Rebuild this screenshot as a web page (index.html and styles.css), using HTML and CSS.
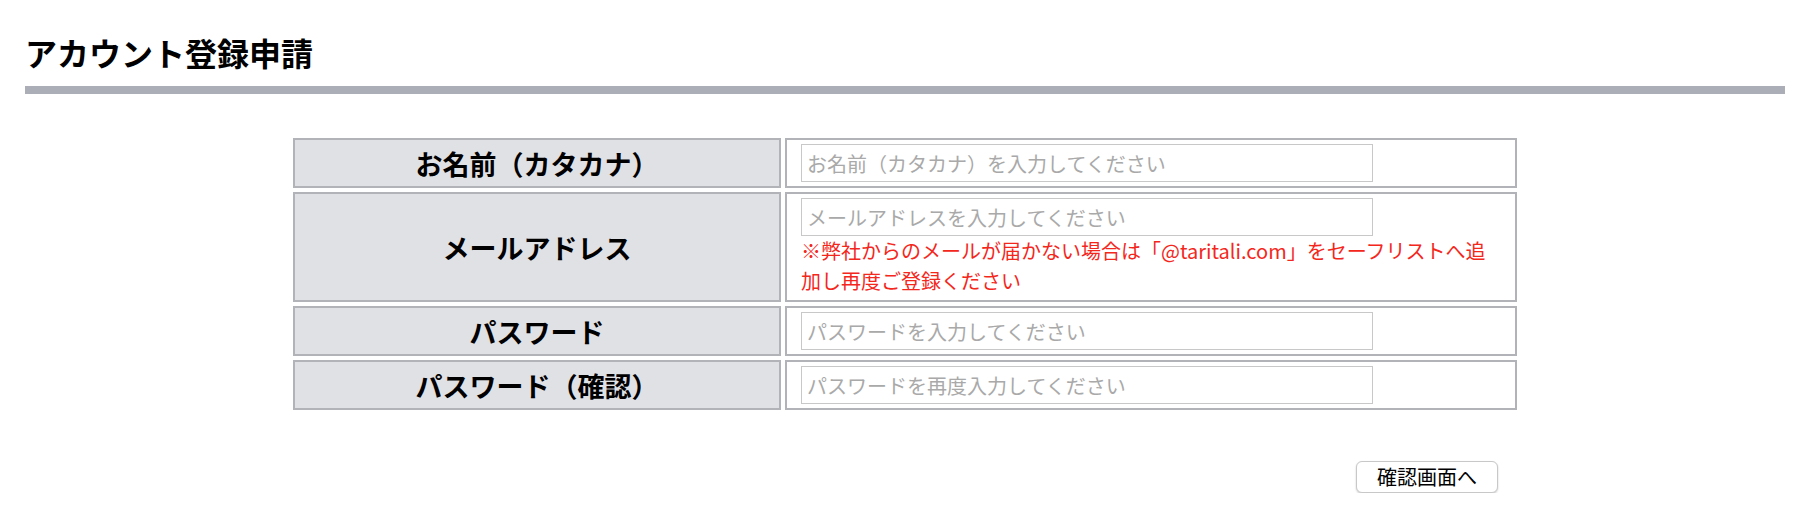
FILE: index.html
```html
<!DOCTYPE html>
<html lang="ja">
<head>
<meta charset="utf-8">
<title>アカウント登録申請</title>
<link rel="stylesheet" href="styles.css">
</head>
<body>
<div class="page">
  <h1 class="page-title">アカウント登録申請</h1>
  <form class="reg-form">
    <div class="form-grid">
      <div class="label-cell">お名前（カタカナ）</div>
      <div class="value-cell">
        <input class="text-input" type="text" placeholder="お名前（カタカナ）を入力してください">
      </div>
      <div class="label-cell">メールアドレス</div>
      <div class="value-cell">
        <input class="text-input" type="text" placeholder="メールアドレスを入力してください">
        <p class="note">※弊社からのメールが届かない場合は「@taritali.com」をセーフリストへ追加し再度ご登録ください</p>
      </div>
      <div class="label-cell">パスワード</div>
      <div class="value-cell">
        <input class="text-input" type="password" placeholder="パスワードを入力してください">
      </div>
      <div class="label-cell">パスワード（確認）</div>
      <div class="value-cell">
        <input class="text-input" type="password" placeholder="パスワードを再度入力してください">
      </div>
    </div>
    <div class="actions">
      <button class="confirm-btn" type="button">確認画面へ</button>
    </div>
  </form>
</div>
</body>
</html>
```

FILE: styles.css
```css
html, body {
  margin: 0;
  padding: 0;
  background: #ffffff;
}

body {
  font-family: "Noto Sans CJK JP", "Noto Sans", sans-serif;
  color: #000;
}

.page {
  padding: 0 25px;
}

.page-title {
  margin: 28px 0 0;
  padding-bottom: 10px;
  font-size: 32px;
  line-height: 48px;
  font-weight: 700;
  border-bottom: 8px solid #abaeb7;
}

.reg-form {
  width: 70%;
  margin: 40px auto 0;
}

.form-grid {
  display: grid;
  grid-template-columns: 2fr 3fr;
  gap: 4px;
  padding: 4px;
}

.label-cell {
  display: flex;
  align-items: center;
  justify-content: center;
  background: #e0e1e5;
  border: 2px solid #b2b3b8;
  font-size: 27px;
  font-weight: 700;
}

.value-cell {
  border: 2px solid #b2b3b8;
  padding: 4px 14px;
}

.text-input {
  display: block;
  box-sizing: border-box;
  width: calc(80% + 12px);
  height: 38px;
  margin: 0;
  padding: 0 5px;
  border: 1px solid #c8c8c8;
  border-radius: 0;
  font-family: inherit;
  font-size: 20px;
  color: #000;
  background: #fff;
  outline: none;
}

.text-input::placeholder {
  color: #a9a9a9;
}

.note {
  margin: 0;
  font-size: 20px;
  line-height: 30px;
  color: #f4271c;
}

.actions {
  display: flex;
  justify-content: flex-end;
  padding-right: 23px;
  margin-top: 47px;
}

.confirm-btn {
  box-sizing: border-box;
  height: 32px;
  padding: 0 20px;
  border: 1px solid #c8c8c8;
  border-radius: 6px;
  background: #fff;
  box-shadow: 0 1px 2px rgba(0, 0, 0, 0.2);
  font-family: inherit;
  font-size: 20px;
  line-height: 30px;
  color: #000;
}
```
